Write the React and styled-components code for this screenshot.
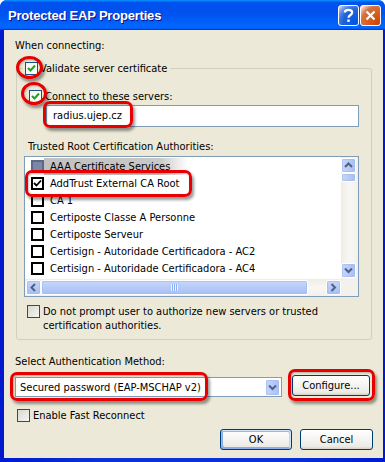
import React from 'react';
import styled, { createGlobalStyle, css } from 'styled-components';

const GlobalStyle = createGlobalStyle`
  html, body { margin: 0; padding: 0; background: #ffffff; }
  body {
    font-family: "DejaVu Sans Condensed", "DejaVu Sans", sans-serif;
    font-size: 11px;
    color: #000;
  }
`;

const Window = styled.div`
  position: relative;
  width: 385px;
  height: 462px;
  display: flex;
  flex-direction: column;
  background: #0831d9;
  border-radius: 7px 7px 0 0;
  overflow: hidden;
`;

const TitleBar = styled.div`
  height: 30px;
  flex: none;
  display: flex;
  align-items: center;
  justify-content: space-between;
  padding: 0 4px 0 8px;
  background: linear-gradient(180deg, #0997ff, #0053ee 8%, #0050ee 40%, #0066ff 88%, #0066ff 93%, #005bff 95%, #003dd7 96%, #003dd7);
`;

const Title = styled.span`
  font-family: "Liberation Sans", Arial, sans-serif;
  font-weight: bold;
  font-size: 13px;
  letter-spacing: -0.2px;
  color: #fff;
  text-shadow: 1px 1px #0f1089;
`;

const Controls = styled.div`
  display: flex;
  gap: 0;
  margin-top: 1px;
`;

const CapButton = styled.div`
  width: 21px;
  height: 21px;
  box-sizing: border-box;
  border: 1px solid #fff;
  border-radius: 3px;
  display: flex;
  align-items: center;
  justify-content: center;
  margin-left: 1px;
  ${p => p.$close ? css`
    background: radial-gradient(circle at 90% 90%, #cc4600 0%, #dc6527 55%, #cd7546 70%, #ffccb2 90%, #fff 100%);
  ` : css`
    background: radial-gradient(circle at 90% 90%, #0054e9 0%, #2263d5 55%, #4479e4 70%, #a3bbec 90%, #fff 100%);
  `}
`;

const Frame = styled.div`
  flex: 1;
  display: flex;
  padding: 0 4px 4px;
  background: linear-gradient(90deg, #0019cf, #0831d9 25%, #0831d9 75%, #0019cf);
`;

const Client = styled.div`
  flex: 1;
  background: #ece9d8;
  padding: 9px 11px 0;
  display: flex;
  flex-direction: column;
`;

const Label = styled.div`
  height: 13px;
  line-height: 13px;
  white-space: nowrap;
  margin-top: ${p => p.$top || 0}px;
  margin-left: ${p => p.$left || 0}px;
`;

const Group = styled.fieldset`
  width: 356px;
  box-sizing: border-box;
  margin: 10px 0 0 1px;
  padding: 0 0 6px;
  border: 1px solid #d0d0bf;
  border-radius: 3px;
  min-inline-size: auto;
`;

const Legend = styled.legend`
  margin-left: 6px;
  padding: 0 3px 0 2px;
  display: flex;
  align-items: center;
  gap: 2px;
  height: 13px;
  line-height: 13px;
`;

const CheckRow = styled.label`
  display: flex;
  align-items: ${p => p.$wrap ? 'flex-start' : 'center'};
  gap: ${p => p.$gap ?? 3}px;
  margin-top: ${p => p.$top || 0}px;
  margin-left: ${p => p.$left || 0}px;
  line-height: ${p => p.$wrap ? 14 : 13}px;
  white-space: nowrap;
`;

const Box = styled.span`
  flex: none;
  width: 13px;
  height: 13px;
  box-sizing: border-box;
  display: inline-flex;
  align-items: center;
  justify-content: center;
  ${p => p.$classic ? css`
    border: 2px solid #000;
    background: ${p.$dim ? '#7c86a6' : '#fff'};
    ${p.$dim && css`border-color: #5d6788;`}
  ` : css`
    border: 1px solid #1c5180;
    background: ${p.$checked
      ? 'linear-gradient(135deg, #f4f4f0, #ffffff)'
      : 'linear-gradient(135deg, #d8d8d0, #f6f6f2)'};
  `}
`;

const TextBox = styled.div`
  width: 313px;
  height: 22px;
  box-sizing: border-box;
  border: 1px solid #7f9db9;
  background: #fff;
  margin: 2px 0 0 29px;
  padding-left: 6px;
  line-height: 20px;
`;

const List = styled.div`
  width: 335px;
  height: 141px;
  box-sizing: border-box;
  border: 1px solid #7f9db9;
  background: #fff;
  margin: 3px 0 0 7px;
  display: grid;
  grid-template-columns: 1fr 17px;
  grid-template-rows: 1fr 17px;
  overflow: hidden;
`;

const Rows = styled.div`
  padding-top: 1px;
  overflow: hidden;
`;

const Row = styled.div`
  height: 17px;
  display: flex;
  align-items: center;
  gap: 6px;
  padding-left: 6px;
  white-space: nowrap;
`;

const RowText = styled.span`
  ${p => p.$shade && css`
    background: linear-gradient(90deg, #c2c2c2 0%, #c8c8c8 80%, rgba(210,210,210,0) 100%);
    margin-left: -6px;
    padding: 2px 18px 2px 6px;
  `}
`;

const VTrack = styled.div`
  display: flex;
  flex-direction: column;
  padding: 1px 1px 1px 0;
  background: linear-gradient(90deg, #eeede5, #f8f7f3 50%, #f3f1ec);
`;

const HTrack = styled.div`
  display: flex;
  padding: 1px 0 0 1px;
  background: linear-gradient(180deg, #eeede5, #f8f7f3 50%, #f3f1ec);
`;

const ScrollBtn = styled.div`
  flex: none;
  width: ${p => p.$w || 15}px;
  height: ${p => p.$h || 15}px;
  box-sizing: border-box;
  border: 1px solid #fff;
  border-radius: 2px;
  background: linear-gradient(${p => p.$horiz ? '180deg' : '90deg'}, #c6d6fc, #b4c8f6 60%, #a9bff4);
  display: flex;
  align-items: center;
  justify-content: center;
  box-shadow: inset 0 0 0 1px rgba(160,185,235,0.6);
`;

const Spacer = styled.div`
  flex: 1;
`;

const Corner = styled.div`
  background: #f3f1ec;
`;

const Grip = styled.span`
  width: 7px;
  height: 7px;
  background: repeating-linear-gradient(90deg, #eef4fe 0 1px, #8cb0f8 1px 2px);
`;

const Wrapped = styled.span`
  white-space: normal;
`;

const ComboRow = styled.div`
  display: flex;
  align-items: flex-start;
  gap: 10px;
  margin-top: 7px;
`;

const Combo = styled.div`
  width: 267px;
  height: 20px;
  box-sizing: border-box;
  margin-top: 2px;
  border: 1px solid #7f9db9;
  background: #fff;
  display: flex;
  align-items: center;
  padding: 0 1px 0 4px;
`;

const ComboText = styled.span`
  flex: 1;
  white-space: nowrap;
`;

const Button = styled.div`
  width: ${p => p.$w}px;
  height: 21px;
  box-sizing: border-box;
  border: 1px solid #003c74;
  border-radius: 3px;
  background: linear-gradient(180deg, #ffffff, #ecebe6 86%, #d6d0c5);
  display: flex;
  align-items: center;
  justify-content: center;
  ${p => p.$default && css`
    box-shadow: inset -1px 1px #cee7ff, inset 1px 2px #98b8ea, inset -2px 2px #bcd4f6, inset 1px -1px #89ade4, inset 2px -2px #89ade4;
  `}
`;

const Footer = styled.div`
  display: flex;
  justify-content: flex-end;
  gap: 8px;
  margin: 7px -1px 0 0;
`;

const Mark = styled.div`
  position: absolute;
  box-sizing: border-box;
  border: 3px solid #e80000;
  box-shadow: 2px 3px 3px rgba(0,0,0,0.4), inset 1px 1px 2px rgba(0,0,0,0.25);
  border-radius: ${p => p.$round ? '50%' : '7px'};
  pointer-events: none;
`;

const Check = () => (
  <svg width="9" height="9" viewBox="0 0 9 9">
    <path d="M1 4 L3.5 6.5 L8 1.5" fill="none" stroke="#21a121" strokeWidth="2" />
  </svg>
);

const BlackCheck = () => (
  <svg width="9" height="9" viewBox="0 0 9 9">
    <path d="M1 4 L3.5 6.5 L8 1.5" fill="none" stroke="#000" strokeWidth="1.8" />
  </svg>
);

const Chevron = ({ dir }) => {
  const pts = {
    up: 'M1 5 L4.5 1.5 L8 5',
    down: 'M1 1.5 L4.5 5 L8 1.5',
    left: 'M5 1 L1.5 4.5 L5 8',
    right: 'M1.5 1 L5 4.5 L1.5 8',
  }[dir];
  const vert = dir === 'up' || dir === 'down';
  return (
    <svg width={vert ? 9 : 7} height={vert ? 7 : 9} viewBox={vert ? '0 0 9 7' : '0 0 7 9'}>
      <path d={pts} fill="none" stroke="#4d6185" strokeWidth="2" />
    </svg>
  );
};

const authorities = [
  'AAA Certificate Services',
  'AddTrust External CA Root',
  'CA 1',
  'Certiposte Classe A Personne',
  'Certiposte Serveur',
  'Certisign - Autoridade Certificadora - AC2',
  'Certisign - Autoridade Certificadora - AC4',
];

export default function App() {
  return (
    <>
      <GlobalStyle />
      <Window>
        <TitleBar>
          <Title>Protected EAP Properties</Title>
          <Controls>
            <CapButton>
              <svg width="11" height="15" viewBox="0 0 11 15">
                <path d="M1.8 4.5 C1.8 1 9.2 1 9.2 4.5 C9.2 7 5.5 7 5.5 9.8" fill="none" stroke="#fff" strokeWidth="2.2" />
                <rect x="4.3" y="11.5" width="2.4" height="2.4" fill="#fff" />
              </svg>
            </CapButton>
            <CapButton $close>
              <svg width="11" height="11" viewBox="0 0 11 11">
                <path d="M1.5 1.5 L9.5 9.5 M9.5 1.5 L1.5 9.5" stroke="#fff" strokeWidth="2.2" />
              </svg>
            </CapButton>
          </Controls>
        </TitleBar>
        <Frame>
          <Client>
            <Label>When connecting:</Label>
            <Group>
              <Legend>
                <Box $checked><Check /></Box>
                Validate server certificate
              </Legend>
              <CheckRow $top={15} $left={12}>
                <Box $checked><Check /></Box>
                Connect to these servers:
              </CheckRow>
              <TextBox>radius.ujep.cz</TextBox>
              <Label $top={13} $left={11}>Trusted Root Certification Authorities:</Label>
              <List>
                <Rows>
                  {authorities.map((name, i) => (
                    <Row key={name}>
                      <Box $classic $dim={i === 0}>{i === 1 && <BlackCheck />}</Box>
                      <RowText $shade={i === 0}>{name}</RowText>
                    </Row>
                  ))}
                </Rows>
                <VTrack>
                  <ScrollBtn><Chevron dir="up" /></ScrollBtn>
                  <ScrollBtn $h={9} />
                  <Spacer />
                  <ScrollBtn><Chevron dir="down" /></ScrollBtn>
                </VTrack>
                <HTrack>
                  <ScrollBtn $horiz><Chevron dir="left" /></ScrollBtn>
                  <ScrollBtn $horiz $w={267}><Grip /></ScrollBtn>
                  <Spacer />
                  <ScrollBtn $horiz><Chevron dir="right" /></ScrollBtn>
                </HTrack>
                <Corner />
              </List>
              <CheckRow $wrap $top={8} $left={10}>
                <Box />
                <Wrapped>
                  Do not prompt user to authorize new servers or trusted<br />
                  certification authorities.
                </Wrapped>
              </CheckRow>
            </Group>
            <Label $top={15}>Select Authentication Method:</Label>
            <ComboRow>
              <Combo>
                <ComboText>Secured password (EAP-MSCHAP v2)</ComboText>
                <ScrollBtn $h={17}><Chevron dir="down" /></ScrollBtn>
              </Combo>
              <Button $w={78}>Configure...</Button>
            </ComboRow>
            <CheckRow $top={12} $left={2}>
              <Box />
              Enable Fast Reconnect
            </CheckRow>
            <Footer>
              <Button $w={72} $default>OK</Button>
              <Button $w={73}>Cancel</Button>
            </Footer>
          </Client>
        </Frame>
        <Mark $round style={{ left: 16, top: 56, width: 27, height: 23 }} />
        <Mark $round style={{ left: 21, top: 82, width: 26, height: 23 }} />
        <Mark style={{ left: 43, top: 101, width: 90, height: 27 }} />
        <Mark style={{ left: 25, top: 170, width: 167, height: 27 }} />
        <Mark style={{ left: 10, top: 372, width: 198, height: 29 }} />
        <Mark style={{ left: 288, top: 369, width: 87, height: 32 }} />
      </Window>
    </>
  );
}
